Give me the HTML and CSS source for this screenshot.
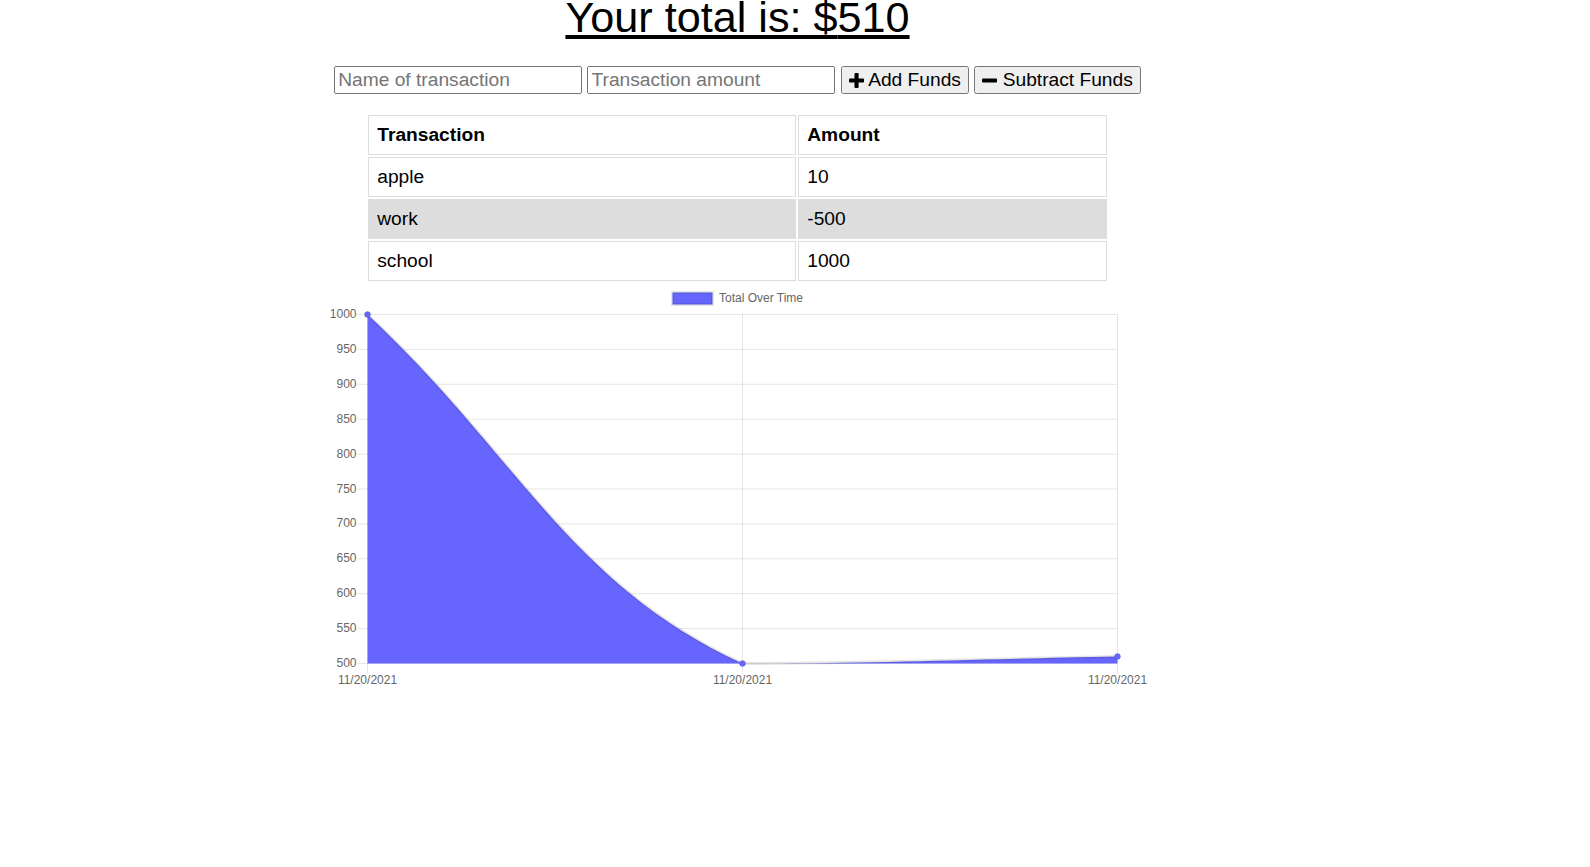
FILE: index.html
```html
<!DOCTYPE html>
<html lang="en">
<head>
<meta charset="utf-8">
<title>Budget Tracker</title>
<link rel="stylesheet" href="styles.css">
</head>
<body>
<div class="wrapper">
  <div class="total">Your total is: $<span id="total">510</span></div>
  <div class="form">
    <input type="text" class="field" placeholder="Name of transaction">
    <input type="number" class="field" placeholder="Transaction amount">
    <button class="btn"><svg class="fa" viewBox="0 0 1408 1408"><rect x="512" y="0" width="384" height="1408" rx="96"/><rect x="0" y="512" width="1408" height="384" rx="96"/></svg> Add Funds</button>
    <button class="btn"><svg class="fa" viewBox="0 0 1408 1408"><rect x="0" y="512" width="1408" height="384" rx="96"/></svg> Subtract Funds</button>
  </div>
  <div class="transactions">
    <table>
      <thead>
        <tr><th class="col-name">Transaction</th><th>Amount</th></tr>
      </thead>
      <tbody>
        <tr><td>apple</td><td>10</td></tr>
        <tr><td>work</td><td>-500</td></tr>
        <tr><td>school</td><td>1000</td></tr>
      </tbody>
    </table>
  </div>
  <svg class="chart" width="825" height="412" viewBox="0 0 825 412">
    <g class="legend">
      <rect x="347.5" y="10.5" width="40" height="12" fill="#6666ff" stroke="rgba(0,0,0,0.1)" stroke-width="3"/>
      <text x="394" y="20" class="lbl">Total Over Time</text>
    </g>
    <g class="grid" stroke="rgba(0,0,0,0.1)" stroke-width="1">
      <line x1="32.5" x2="792.5" y1="32.5" y2="32.5"/>
      <line x1="32.5" x2="792.5" y1="67.4" y2="67.4"/>
      <line x1="32.5" x2="792.5" y1="102.3" y2="102.3"/>
      <line x1="32.5" x2="792.5" y1="137.2" y2="137.2"/>
      <line x1="32.5" x2="792.5" y1="172.1" y2="172.1"/>
      <line x1="32.5" x2="792.5" y1="207" y2="207"/>
      <line x1="32.5" x2="792.5" y1="241.9" y2="241.9"/>
      <line x1="32.5" x2="792.5" y1="276.8" y2="276.8"/>
      <line x1="32.5" x2="792.5" y1="311.7" y2="311.7"/>
      <line x1="32.5" x2="792.5" y1="346.6" y2="346.6"/>
      <line x1="32.5" x2="792.5" y1="381.5" y2="381.5"/>
      <line x1="42.5" x2="42.5" y1="32.5" y2="391.5"/>
      <line x1="417.5" x2="417.5" y1="32.5" y2="391.5"/>
      <line x1="792.5" x2="792.5" y1="32.5" y2="391.5"/>
    </g>
    <path d="M42.5,32.5 C192.4,172 244.1,302 417.5,381.5 C544,381.5 642.1,377.3 792.5,374.5 L792.5,381.5 L42.5,381.5 Z" fill="#6666ff"/>
    <path d="M42.5,32.5 C192.4,172 244.1,302 417.5,381.5 C544,381.5 642.1,377.3 792.5,374.5" fill="none" stroke="rgba(0,0,0,0.1)" stroke-width="3"/>
    <g fill="#6666ff" stroke="rgba(0,0,0,0.1)" stroke-width="1">
      <circle cx="42.5" cy="32.5" r="3"/>
      <circle cx="417.5" cy="381.5" r="3"/>
      <circle cx="792.5" cy="374.5" r="3"/>
    </g>
    <g class="lbl" text-anchor="end">
      <text x="31.5" y="36">1000</text>
      <text x="31.5" y="70.9">950</text>
      <text x="31.5" y="105.8">900</text>
      <text x="31.5" y="140.7">850</text>
      <text x="31.5" y="175.6">800</text>
      <text x="31.5" y="210.5">750</text>
      <text x="31.5" y="245.4">700</text>
      <text x="31.5" y="280.3">650</text>
      <text x="31.5" y="315.2">600</text>
      <text x="31.5" y="350.1">550</text>
      <text x="31.5" y="385">500</text>
    </g>
    <g class="lbl" text-anchor="middle">
      <text x="42.5" y="402">11/20/2021</text>
      <text x="417.5" y="402">11/20/2021</text>
      <text x="792.5" y="402">11/20/2021</text>
    </g>
  </svg>
</div>
</body>
</html>
```
FILE: styles.css
```css
body {
  margin: 0;
  font-family: "Liberation Sans", Arial, sans-serif;
  font-size: 19.2px;
  color: #000;
  background: #fff;
  overflow: hidden;
}

.wrapper {
  width: 825px;
  margin: -7px 0 0 325px;
  text-align: center;
}

.total {
  font-size: 43.2px;
  text-decoration: underline;
}

.form {
  margin-top: 24px;
  display: flex;
  justify-content: center;
  align-items: center;
  gap: 5.3px;
}

.field {
  font-family: "Liberation Sans", Arial, sans-serif;
  font-size: 19.2px;
  width: 248px;
  box-sizing: border-box;
  margin: 0;
}

.btn {
  font-family: "Liberation Sans", Arial, sans-serif;
  font-size: 19.2px;
  margin: 0;
}

.fa {
  width: 15.1px;
  height: 15.1px;
  vertical-align: -2px;
  fill: #000;
}

.transactions {
  width: 90%;
  margin: 19px auto 0;
  text-align: left;
}

table {
  width: 100%;
  border-spacing: 2px;
}

th,
td {
  padding: 8px;
  border: 1px solid #dddddd;
  text-align: left;
}

.col-name {
  width: 410px;
}

tbody tr:nth-child(even) {
  background-color: #dddddd;
}

.chart {
  display: block;
  margin-top: -1px;
}

.lbl {
  font-family: "Liberation Sans", Arial, sans-serif;
  font-size: 12px;
  fill: #666666;
}
```
